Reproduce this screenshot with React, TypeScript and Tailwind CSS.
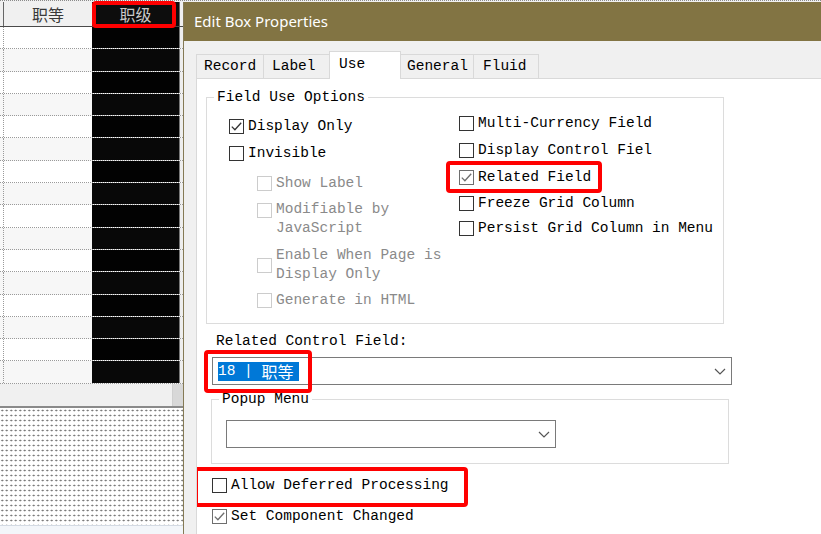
import React from "react";

const MONO = "font-['Liberation_Mono','Noto_Sans_CJK_SC',monospace]";

function Check({ color }: { color: string }) {
  return (
    <svg width="13" height="13" viewBox="0 0 13 13" className="block">
      <path d="M1.8 6.6 L4.9 9.7 L11.2 2.8" fill="none" stroke={color} strokeWidth="1.3" />
    </svg>
  );
}

function Box({ checked = false, disabled = false, gray = false }: { checked?: boolean; disabled?: boolean; gray?: boolean }) {
  const border = disabled ? "border-[#cccccc]" : gray ? "border-[#6e6e6e]" : "border-[#333333]";
  return (
    <span className={`flex h-[15px] w-[15px] shrink-0 items-center justify-center border bg-white ${border}`}>
      {checked && <Check color={gray ? "#6e6e6e" : "#333333"} />}
    </span>
  );
}

function Chevron() {
  return (
    <svg width="12" height="7" viewBox="0 0 12 7" className="block">
      <path d="M1 1 L6 6 L11 1" fill="none" stroke="#555555" strokeWidth="1.2" />
    </svg>
  );
}

function Opt({ label, checked, disabled, gray, className = "" }: { label: string; checked?: boolean; disabled?: boolean; gray?: boolean; className?: string }) {
  return (
    <div className={`flex h-[19px] items-center gap-[4px] whitespace-nowrap ${className}`}>
      <Box checked={checked} disabled={disabled} gray={gray} />
      <span className={disabled ? "text-[#8a8a8a]" : "text-black"}>{label}</span>
    </div>
  );
}

function RedBox({ className }: { className: string }) {
  return <div className={`pointer-events-none absolute rounded-[4px] border-[4px] border-[#ff0000] ${className}`} />;
}

function LeftGrid() {
  const rows = Array.from({ length: 16 });
  return (
    <div className="flex w-[183px] shrink-0 flex-col bg-white">
      {/* header */}
      <div className="relative flex h-[25px] border-b border-[#4a4a4a] bg-[#f0f0f0] font-['Noto_Sans_CJK_SC',sans-serif] text-[16px]">
        <div className="w-[4px] border-r border-[#666666]" />
        <div className="flex w-[88px] items-center justify-center text-[#3a3a3a]">职等</div>
        <div className="flex w-[87px] items-center justify-center bg-[#0d0d0d] text-[#c8c8c8]">职级</div>
        <div className="flex-1 border-l border-[#666666] bg-[#f0f0f0]" />
        <RedBox className="left-[92px] top-[-1px] h-[27px] w-[84px]" />
      </div>
      {/* rows */}
      {rows.map((_, i) => (
        <div
          key={i}
          className={`flex h-[22.3px] border-b border-dotted border-[#9a9a9a] ${i % 2 ? "bg-[#f7f7f7]" : "bg-white"}`}
        >
          <div className="w-[4px] border-r border-dotted border-[#9a9a9a]" />
          <div className="w-[88px]" />
          <div className={`w-[87px] ${i % 2 ? "bg-[#080808]" : "bg-[#020202]"}`} />
          <div className="flex-1 border-l border-[#777777] bg-[#eeeeee]" />
        </div>
      ))}
      {/* horizontal scroll */}
      <div className="flex h-[22px] justify-end bg-[#f0f0f0]">
        <div className="w-[11px] border-l border-[#cfcfcf] bg-[#d8d8d8]" />
      </div>
      {/* canvas */}
      <div className="flex-1 border-t-2 border-[#8a8a8a] bg-white bg-[radial-gradient(circle,#6f6f6f_0.8px,transparent_1.1px)] bg-size-[4.5px_5px] bg-[length:4.5px_5px]" />
      <div className="h-[9px] border-t border-[#d3dae3] bg-[#f3f6fa]" />
    </div>
  );
}

function Tab({ label, w, pl, selected = false, first = false }: { label: string; w: string; pl: string; selected?: boolean; first?: boolean }) {
  if (selected) {
    return (
      <div className={`relative z-10 -mb-px -ml-px flex h-[28px] items-start border border-b-0 border-[#d9d9d9] bg-white pt-[3px] ${w} ${pl}`}>
        {label}
      </div>
    );
  }
  return (
    <div className={`flex h-[24px] items-center border border-b-0 border-[#d9d9d9] bg-[#f0f0f0] ${first ? "" : "-ml-px"} ${w} ${pl}`}>
      {label}
    </div>
  );
}

function Dialog() {
  return (
    <div className="flex min-w-0 flex-1 flex-col border-l border-[#857a55] bg-[#f0f0f0]">
      <div className="flex h-[39px] shrink-0 items-center bg-[#827443] pl-[10px] font-['Noto_Sans',sans-serif] text-[15px] text-white">
        Edit Box Properties
      </div>
      <div className={`flex flex-1 flex-col pl-[12px] pt-[10px] text-[14.5px] leading-[19px] text-black ${MONO}`}>
        {/* tabs */}
        <div className="flex h-[27px] items-end">
          <Tab label="Record" w="w-[68px]" pl="pl-[7px]" first />
          <Tab label="Label" w="w-[67px]" pl="pl-[8px]" />
          <Tab label="Use" w="w-[72px]" pl="pl-[9px]" selected />
          <Tab label="General" w="w-[74px]" pl="pl-[6px]" />
          <Tab label="Fluid" w="w-[66px]" pl="pl-[9px]" />
        </div>
        {/* panel */}
        <div className="flex flex-1 flex-col overflow-hidden border-l border-t border-[#d9d9d9] bg-white pl-[9px] pt-[9px]">
          <fieldset className="h-[236px] w-[518px] shrink-0 border border-[#dcdcdc]">
            <legend className="ml-[7px] px-[3px] leading-[19px]">Field Use Options</legend>
            <div className="flex">
              <div className="flex w-[230px] shrink-0 flex-col pl-[22px] pt-[10px]">
                <Opt label="Display Only" checked />
                <Opt label="Invisible" className="mt-[8px]" />
                <Opt label="Show Label" disabled className="mt-[11px] pl-[28px]" />
                <div className="mt-[7px] flex items-start gap-[4px] whitespace-nowrap pl-[28px]">
                  <span className="mt-[3px]">
                    <Box disabled />
                  </span>
                  <span className="text-[#8a8a8a]">
                    Modifiable by
                    <br />
                    JavaScript
                  </span>
                </div>
                <div className="mt-[8px] flex items-center gap-[4px] whitespace-nowrap pl-[28px]">
                  <Box disabled />
                  <span className="text-[#8a8a8a]">
                    Enable When Page is
                    <br />
                    Display Only
                  </span>
                </div>
                <Opt label="Generate in HTML" disabled className="mt-[7px] pl-[28px]" />
              </div>
              <div className="flex flex-col pl-[22px] pt-[7px]">
                <Opt label="Multi-Currency Field" />
                <Opt label="Display Control Fiel" className="mt-[8px]" />
                <div className="relative mt-[8px]">
                  <Opt label="Related Field" checked gray />
                  <RedBox className="left-[-13px] top-[-7px] h-[32px] w-[156px]" />
                </div>
                <Opt label="Freeze Grid Column" className="mt-[7px]" />
                <Opt label="Persist Grid Column in Menu" className="mt-[6px]" />
              </div>
            </div>
          </fieldset>

          <div className="ml-[10px] mt-[8px] h-[19px]">Related Control Field:</div>

          <div className="relative ml-[6px] mt-[6px] flex h-[28px] w-[520px] shrink-0 items-center justify-between border border-[#7a7a7a] bg-white pl-[5px] pr-[5px]">
            <span className="flex h-[19px] items-center whitespace-pre bg-[#0078d7] pr-[5px] text-white">
              {"18 | "}
              <span className="font-['Noto_Sans_CJK_SC',sans-serif] text-[16px]">职等</span>
            </span>
            <Chevron />
            <RedBox className="left-[-9px] top-[-8px] h-[43px] w-[108px]" />
          </div>

          <fieldset className="ml-[5px] mt-[5px] h-[74px] w-[518px] shrink-0 border border-[#dcdcdc]">
            <legend className="ml-[7px] px-[3px] leading-[19px]">Popup Menu</legend>
            <div className="ml-[14px] mt-[11px] flex h-[28px] w-[330px] items-center justify-end border border-[#7a7a7a] bg-white pr-[5px]">
              <Chevron />
            </div>
          </fieldset>

          <div className="relative ml-[6px] mt-[12px] w-fit">
            <Opt label="Allow Deferred Processing" />
            <RedBox className="left-[-18px] top-[-9px] h-[40px] w-[274px]" />
          </div>
          <Opt label="Set Component Changed" checked gray className="ml-[6px] mt-[12px]" />
          <Opt label="Enable as Page Field" disabled className="ml-[6px] mt-[7px]" />
        </div>
      </div>
    </div>
  );
}

export default function App() {
  return (
    <div className="flex h-[534px] w-[821px] flex-col overflow-hidden bg-white">
      <div className="h-[2px] shrink-0 border-t border-dotted border-[#8a8a8a] bg-[#f0f0f0]" />
      <div className="flex min-h-0 flex-1">
        <LeftGrid />
        <Dialog />
      </div>
    </div>
  );
}
